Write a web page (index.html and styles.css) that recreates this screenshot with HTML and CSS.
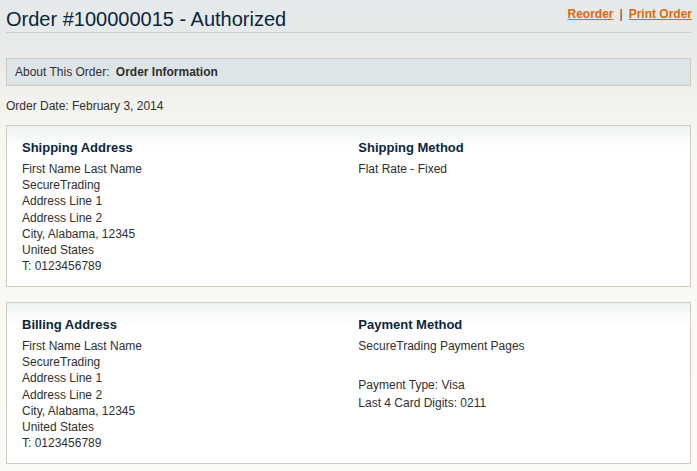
FILE: index.html
```html
<!DOCTYPE html>
<html>
<head>
<meta charset="utf-8">
<link rel="stylesheet" href="styles.css">
</head>
<body>
<div class="main">
  <div class="page-title">
    <h1>Order #100000015 - Authorized</h1>
    <div class="title-links"><a href="#">Reorder</a><span class="sep">|</span><a href="#">Print Order</a></div>
  </div>
  <div class="order-info">
    <span class="label">About This Order:</span>
    <strong>Order Information</strong>
  </div>
  <p class="order-date">Order Date: February 3, 2014</p>

  <div class="box">
    <div class="col">
      <h2>Shipping Address</h2>
      <address>First Name Last Name<br>SecureTrading<br>Address Line 1<br>Address Line 2<br>City, Alabama, 12345<br>United States<br>T: 0123456789</address>
    </div>
    <div class="col col-2">
      <h2>Shipping Method</h2>
      <p class="method">Flat Rate - Fixed</p>
    </div>
  </div>

  <div class="box">
    <div class="col">
      <h2>Billing Address</h2>
      <address>First Name Last Name<br>SecureTrading<br>Address Line 1<br>Address Line 2<br>City, Alabama, 12345<br>United States<br>T: 0123456789</address>
    </div>
    <div class="col col-2">
      <h2>Payment Method</h2>
      <p class="method pay-name">SecureTrading Payment Pages</p>
      <p class="pay-line">Payment Type: Visa</p>
      <p class="pay-line">Last 4 Card Digits: 0211</p>
    </div>
  </div>
</div>
</body>
</html>
```

FILE: styles.css
```css
html, body {
  margin: 0;
  padding: 0;
}
body {
  font-family: "Liberation Sans", Arial, sans-serif;
  font-size: 12px;
  color: #2f2f2f;
  background: linear-gradient(to bottom, #e5e9eb 0px, #e9ebea 60px, #f3f3ee 105px, #f9f8f3 160px, #fbfaf6 471px);
  min-height: 471px;
}
.main {
  width: 685px;
  padding: 0 6px;
}
.page-title {
  display: flex;
  justify-content: space-between;
  align-items: flex-start;
  border-bottom: 1px solid #cccccc;
  padding-bottom: 1px;
}
.page-title h1 {
  margin: 7px 0 0 0;
  font-size: 20px;
  font-weight: normal;
  line-height: 24px;
  color: #0a263c;
}
.title-links {
  margin: 6px -1px 0 0;
  font-weight: bold;
  font-size: 12px;
  line-height: 16px;
}
.title-links a {
  color: #dc6809;
  text-decoration: underline;
}
.sep {
  color: #2f2f2f;
  font-weight: normal;
  margin: 0 6px;
}
.order-info {
  margin-top: 25px;
  background: #dee5e8;
  border: 1px solid #d0cbc1;
  padding: 5px 8px;
  line-height: 16px;
}
.order-info .label {
  margin-right: 3px;
}
.order-info strong {
  color: #2f2f2f;
}
.order-date {
  margin: 12px 0 11px 0;
  line-height: 16px;
}
.box {
  display: flex;
  justify-content: space-between;
  border: 1px solid #d0cbc1;
  background: linear-gradient(to bottom, #edf1f2 0px, #f6f8f8 10px, #ffffff 22px);
  padding: 14px 15px 11px 15px;
  margin-bottom: 15px;
  height: 135px;
}
.col {
  width: 48.5%;
}
.col h2 {
  margin: 0 0 5px 0;
  font-size: 13px;
  font-weight: bold;
  line-height: 16px;
  color: #0a263c;
}
address {
  font-style: normal;
  line-height: 16.2px;
}
.method {
  margin: 0;
  line-height: 16.2px;
}
.pay-name {
  margin-bottom: 22px;
}
.pay-line {
  margin: 0;
  line-height: 18px;
}
```
